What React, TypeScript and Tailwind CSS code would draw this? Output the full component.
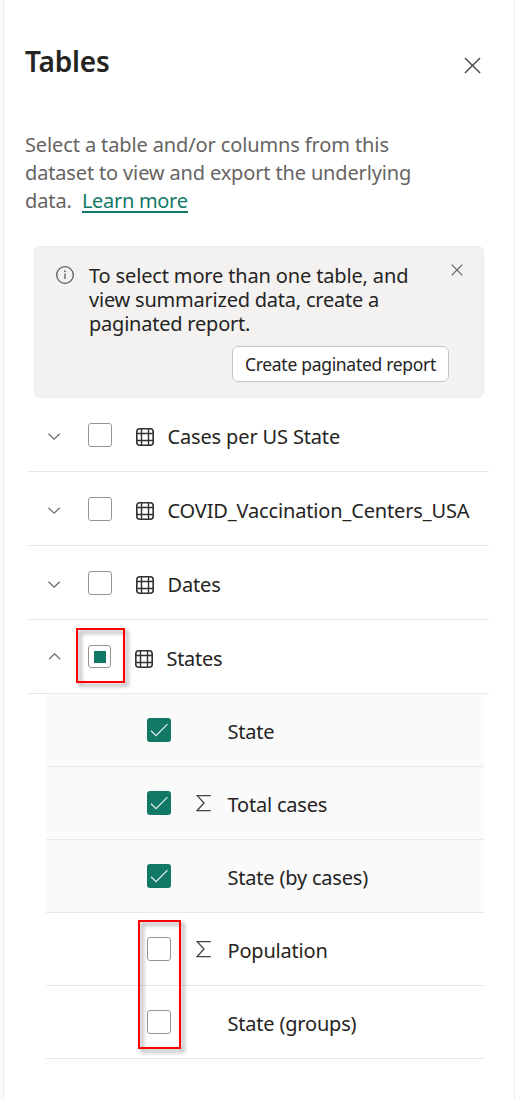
import React from "react";

function Close({ className, weight }: { className: string; weight: number }) {
  return (
    <svg className={className} viewBox="0 0 18 18" fill="none" stroke="currentColor" strokeWidth={weight}>
      <path d="M1 1L17 17M17 1L1 17" />
    </svg>
  );
}

function Chevron({ up }: { up?: boolean }) {
  return (
    <svg width="14" height="8" viewBox="0 0 14 8" fill="none" stroke="#6b6967" strokeWidth="1.2">
      <path d={up ? "M1 6.2L6.6 0.8L12.2 6.2" : "M0.5 0.8L6.1 6.2L11.7 0.8"} />
    </svg>
  );
}

function TableIcon() {
  return (
    <svg className="shrink-0" width="18" height="18" viewBox="0 0 18 18" fill="none" stroke="#323130" strokeWidth="1.6">
      <rect x="0.8" y="0.8" width="16.4" height="16.4" rx="3" />
      <path d="M5.5 1V17M12.5 1V17M1 5.5H17M1 12.5H17" strokeWidth="1.4" />
    </svg>
  );
}

function Sigma() {
  return (
    <svg width="16" height="17" viewBox="0 0 16 17" fill="none" stroke="#484644" strokeWidth="1.3">
      <path d="M14.8 0.7H1.2L8 8L1 15.7H14.8" />
    </svg>
  );
}

function CheckBox({ checked }: { checked?: boolean }) {
  return checked ? (
    <span className="block size-6 shrink-0 rounded-[3px] bg-[#117865]">
      <svg width="24" height="24" viewBox="0 0 24 24" fill="none" stroke="#e3f1ee" strokeWidth="1.2">
        <path d="M4 12.8L9 17.7L20.5 6.2" />
      </svg>
    </span>
  ) : (
    <span className="block size-6 shrink-0 rounded-[3px] border border-[#979593] bg-white" />
  );
}

const tables = ["Cases per US State", "COVID_Vaccination_Centers_USA", "Dates"];

const columns = [
  { name: "State", checked: true },
  { name: "Total cases", checked: true, sum: true },
  { name: "State (by cases)", checked: true },
  { name: "Population", sum: true },
  { name: "State (groups)" },
];

const callout = "pointer-events-none absolute border-2 border-[#ff0000] drop-shadow-[3px_3px_2px_rgba(0,0,0,0.45)]";

export default function App() {
  return (
    <div className="flex h-[1099px] w-[515px] overflow-hidden bg-[#faf9f8] pl-[3px] font-['Noto_Sans','Open_Sans',sans-serif] text-[20px] text-[#252423]">
      <main className="w-full border-x border-[#edebe9] bg-white">
        <header className="flex h-[131px] justify-between pl-[21px] pr-[33px] pt-[41px]">
          <h1 className="text-[28px] font-semibold leading-[40px] tracking-[-0.2px]">Tables</h1>
          <button className="mt-4 size-[17px] text-[#4a4846]">
            <Close className="size-[17px]" weight={1.5} />
          </button>
        </header>

        <p className="h-[115px] whitespace-nowrap pl-[21px] leading-[28px] tracking-[-0.12px] text-[#666462]">
          Select a table and/or columns from this
          <br />
          <span className="tracking-[-0.15px]">dataset to view and export the underlying</span>
          <br />
          data.&nbsp;{" "}
          <a className="inline-block h-[26px] border-b-2 border-[#117865] tracking-[-0.3px] text-[#117865]">Learn more</a>
        </p>

        <section className="ml-[30px] flex h-[152px] w-[450px] flex-col rounded-md border border-[#edebe9] bg-[#f3f2f1] pt-4">
          <div className="flex h-[83px]">
            <svg className="ml-[21px] mt-[3px] shrink-0" width="18" height="18" viewBox="0 0 18 18" fill="none" stroke="#5c5a58" strokeWidth="1.3">
              <circle cx="9" cy="9" r="8.3" />
              <path d="M9 7.5V13" />
              <path d="M9 4.6V6" strokeWidth="1.6" />
            </svg>
            <p className="ml-[15px] mt-px w-[362px] whitespace-nowrap leading-[24px] tracking-[-0.15px]">
              To select more than one table, and
              <br />
              <span className="tracking-[-0.22px]">view summarized data, create a</span>
              <br />
              <span className="tracking-[-0.22px]">paginated report.</span>
            </p>
            <button className="mt-px size-3 text-[#605e5c]">
              <Close className="size-3" weight={1.7} />
            </button>
          </div>
          <button className="ml-[197px] flex h-9 w-[217px] items-center justify-center whitespace-nowrap rounded-md border border-[#c8c6c4] bg-white text-[17.5px] tracking-[-0.3px]">
            Create paginated report
          </button>
        </section>

        <ul className="ml-6 w-[461px] tracking-[-0.15px]">
          {tables.map((name) => (
            <li key={name} className="flex h-[74px] items-start border-b border-[#e8e8e8] pl-5">
              <span className="mt-[35px] w-10">
                <Chevron />
              </span>
              <span className="mt-[25px] w-12">
                <CheckBox />
              </span>
              <span className="mt-[30px] w-[31.5px]">
                <TableIcon />
              </span>
              <span className="mt-[25px] whitespace-nowrap leading-[28px]">{name}</span>
            </li>
          ))}
          <li className="relative flex h-[74px] items-start border-b border-[#e8e8e8] pl-5">
            <span className="mt-[33px] w-10">
              <Chevron up />
            </span>
            <span className="mt-[25px] w-[47px]">
              <span className="flex size-[23px] items-center justify-center rounded-[3px] border border-[#979593]">
                <span className="size-3 bg-[#117865]" />
              </span>
            </span>
            <span className="mt-[30px] w-[31.5px]">
              <TableIcon />
            </span>
            <span className="mt-[25px] leading-[28px] tracking-[-0.3px]">States</span>
            <span className={callout + " left-[48px] top-[8px] h-[55px] w-[49px]"} />
          </li>
        </ul>

        <ul className="relative ml-[42px] w-[438px]">
          {columns.map((c) => (
            <li
              key={c.name}
              className={"flex h-[73px] items-start border-b border-[#e8e8e8] pl-[101px] " + (c.checked ? "bg-[#fafafa]" : "bg-white")}
            >
              <span className="mt-6 w-[49px]">
                <CheckBox checked={c.checked} />
              </span>
              <span className="mt-[28px] w-[31.5px]">{c.sum && <Sigma />}</span>
              <span className="mt-6 whitespace-nowrap leading-[28px] tracking-[-0.2px]">{c.name}</span>
            </li>
          ))}
          <li className={callout + " left-[92px] top-[226px] h-[129px] w-[43px]"} />
        </ul>
      </main>
    </div>
  );
}
